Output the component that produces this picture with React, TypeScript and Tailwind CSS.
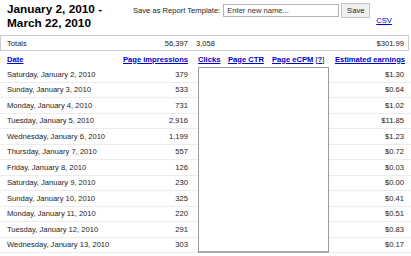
import type React from 'react';

interface DayRow {
  date: string;
  impressions: string;
  earnings: string;
}

const rows: DayRow[] = [
  { date: 'Saturday, January 2, 2010', impressions: '379', earnings: '$1.30' },
  { date: 'Sunday, January 3, 2010', impressions: '533', earnings: '$0.64' },
  { date: 'Monday, January 4, 2010', impressions: '731', earnings: '$1.02' },
  { date: 'Tuesday, January 5, 2010', impressions: '2,916', earnings: '$11.85' },
  { date: 'Wednesday, January 6, 2010', impressions: '1,199', earnings: '$1.23' },
  { date: 'Thursday, January 7, 2010', impressions: '557', earnings: '$0.72' },
  { date: 'Friday, January 8, 2010', impressions: '126', earnings: '$0.03' },
  { date: 'Saturday, January 9, 2010', impressions: '230', earnings: '$0.00' },
  { date: 'Sunday, January 10, 2010', impressions: '325', earnings: '$0.41' },
  { date: 'Monday, January 11, 2010', impressions: '220', earnings: '$0.51' },
  { date: 'Tuesday, January 12, 2010', impressions: '291', earnings: '$0.83' },
  { date: 'Wednesday, January 13, 2010', impressions: '303', earnings: '$0.17' },
];

const link = 'font-bold text-[#0000cc] underline';

const App: React.FC = () => (
  <div className="w-[411px] h-[256px] overflow-hidden bg-white font-['Liberation_Sans',Arial,sans-serif] text-[7.6px] leading-[9px] text-[#222]">
    {/* header: title + report template form */}
    <div className="flex h-[35px]">
      <h1 className="w-[126px] pl-[7px] pt-[2px] text-[11.8px] leading-[14px] font-bold text-black">
        January 2, 2010 -<br />
        March 22, 2010
      </h1>
      <div className="flex pl-[7px] pt-[3px]">
        <span className="pt-[3px]">Save as Report Template:</span>
        <div className="ml-[3px] mt-[1px] h-[13px] w-[116px] border border-[#b5b5b5] bg-white pl-[3px] pt-[1px] text-[#333]">
          Enter new name...
        </div>
        <div className="ml-[2px] flex h-[15px] w-[29px] items-center justify-center border border-[#c4c4c4] bg-[#f0f0f0] text-[#222]">
          Save
        </div>
        <a className="ml-[6px] mt-[13px] text-[#0000cc] underline">CSV</a>
      </div>
    </div>

    {/* totals */}
    <div className="mr-[2px] flex h-[16px] items-center border border-[#cccccc] text-[#222]">
      <span className="w-[115px] pl-[6px]">Totals</span>
      <span className="w-[72px] text-right">56,397</span>
      <span className="ml-[8px] flex-1">3,058</span>
      <span className="pr-[4px]">$301.99</span>
    </div>

    {/* column headings */}
    <div className="flex h-[16px] items-center">
      <a className={`w-[116px] pl-[7px] ${link}`}>Date</a>
      <a className={`w-[72px] text-right ${link}`}>Page impressions</a>
      <a className={`ml-[10px] w-[30px] ${link}`}>Clicks</a>
      <a className={`w-[44px] ${link}`}>Page CTR</a>
      <span className="w-[62px]">
        <a className={link}>Page eCPM</a> <span className="text-black">[</span>
        <a className={link}>?</a>
        <span className="text-black">]</span>
      </span>
      <a className={`w-[71px] text-right ${link}`}>Estimated earnings</a>
    </div>

    {/* rows */}
    <div className="relative">
      {rows.map((r) => (
        <div key={r.date} className="flex h-[15.5px] items-center border-b border-[#ececec]">
          <span className="w-[116px] pl-[7px]">{r.date}</span>
          <span className="w-[72px] text-right">{r.impressions}</span>
          <span className="flex-1" />
          <span className="pr-[7px]">{r.earnings}</span>
        </div>
      ))}
      <div className="absolute left-[198px] top-0 h-[186px] w-[131px] border border-[#9a9a9a] border-b-2 border-b-[#a8a8a8] bg-white" />
    </div>
  </div>
);

export default App;
